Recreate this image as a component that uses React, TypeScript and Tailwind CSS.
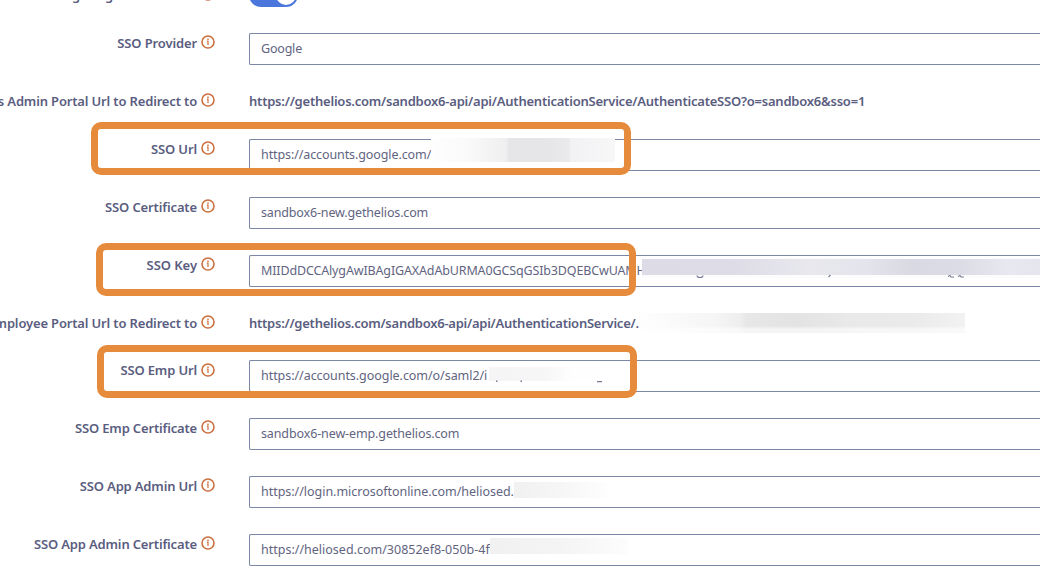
import type { ReactNode } from 'react'

interface Field {
  label: string
  labelClass?: string
  value: string
  valueClass: string
  plain?: boolean
  // masking strip laid over the value
  mask?: ReactNode
  // orange frame around label and value
  frame?: string
}

const fields: Field[] = [
  {
    label: 'SSO Provider',
    labelClass: 'tracking-[-0.13px]',
    value: 'Google',
    valueClass: 'tracking-[-0.2px]'
  },
  {
    label: 'Helios Admin Portal Url to Redirect to',
    labelClass: 'tracking-[-0.16px]',
    value:
      'https://gethelios.com/sandbox6-api/api/AuthenticationService/AuthenticateSSO?o=sandbox6&sso=1',
    valueClass: 'tracking-[-0.22px]',
    plain: true
  },
  {
    label: 'SSO Url',
    labelClass: 'tracking-[-0.13px]',
    value: 'https://accounts.google.com/',
    valueClass: 'tracking-[-0.1px]',
    mask: (
      <div className="absolute -top-px left-[182px] h-6 w-[184px] bg-[linear-gradient(to_right,#fefefe_0%,#fafafa_20%,#f3f3f4_32%,#efeff0_41%,#e6e6e9_42%,#e6e6e9_64%,#eaeaec_75%,#f2f2f4_76%,#f7f7f8_100%)]" />
    ),
    frame: 'left-[91px] top-[-16.5px] h-[53px] w-[540px]'
  },
  {
    label: 'SSO Certificate',
    labelClass: 'tracking-[-0.13px]',
    value: 'sandbox6-new.gethelios.com',
    valueClass: 'tracking-[-0.15px]'
  },
  {
    label: 'SSO Key',
    labelClass: 'tracking-[-0.05px]',
    value: 'MIIDdDCCAlygAwIBAgIGAXAdAbURMA0GCSqGSIb3DQEBCwUAMH',
    valueClass: 'tracking-[-0.14px]',
    mask: (
      <>
        <div className="absolute left-[393px] top-[3px] h-5 w-[398px] bg-[#fcfcfd]" />
        <div className="absolute left-[393px] top-[4px] h-4 w-[398px] bg-[linear-gradient(to_right,#dddce6_0%,#dedde7_24%,#e8e8ee_42%,#e4e4ec_56%,#d9d9e3_68%,#dcdce6_80%,#e8e8f1_92%,#e5e5ee_100%)]" />
        <svg className="absolute left-[393px] top-[19px] h-1.5 w-[398px]" fill="none" stroke="#777b94">
          <path
            d="M55 1.5q0 2 3 2t3-2M186.500 3l2-2M306 2.500l2-1 1 1.500h3M316 2.500l2-1 1 1.500h3"
            strokeWidth="1.1"
          />
        </svg>
      </>
    ),
    frame: 'left-[95.5px] top-[-11.5px] h-[53px] w-[540px]'
  },
  {
    label: 'Helios Employee Portal Url to Redirect to',
    labelClass: 'tracking-[-0.16px]',
    value: 'https://gethelios.com/sandbox6-api/api/AuthenticationService/.',
    valueClass: 'tracking-[-0.25px]',
    plain: true,
    mask: (
      <div className="absolute left-[390px] top-0 h-5 w-[326px] bg-[linear-gradient(to_right,#fefefe_0%,#f5f5f5_24%,#eeeeee_31%,#e7e7e8_33%,#e3e3e4_48%,#e9e9e9_65%,#eaeaea_83%,#f2f2f2_100%)]">
        <div className="h-full bg-linear-to-b from-transparent from-65% to-white/60 to-80%" />
      </div>
    )
  },
  {
    label: 'SSO Emp Url',
    labelClass: 'tracking-[-0.15px]',
    value: 'https://accounts.google.com/o/saml2/i',
    valueClass: 'tracking-[-0.05px]',
    mask: (
      <>
        <div className="absolute left-[240px] top-[7px] h-3.5 w-[110px] bg-linear-to-r from-[#f5f5f5] via-[#f6f6f6] via-50% to-[#fefefe] to-75%" />
        <svg className="absolute left-[240px] top-[20px] h-1 w-[120px]" fill="#777b94">
          <path d="M7 .5h1.500v1.500H7zM31.500.5H33v1.500h-1.500zM108 1h5v1.200h-5z" />
        </svg>
      </>
    ),
    frame: 'left-[96.5px] top-[-15px] h-[53px] w-[540px]'
  },
  {
    label: 'SSO Emp Certificate',
    labelClass: 'tracking-[-0.17px]',
    value: 'sandbox6-new-emp.gethelios.com',
    valueClass: 'tracking-[-0.12px]'
  },
  {
    label: 'SSO App Admin Url',
    labelClass: 'tracking-[-0.17px]',
    value: 'https://login.microsoftonline.com/heliosed.',
    valueClass: 'tracking-[-0.03px]',
    mask: (
      <div className="absolute left-[265px] top-[6px] h-4 w-[94px] bg-linear-to-r from-[#f1f1f1] via-[#f6f6f6] to-[#fefefe]" />
    )
  },
  {
    label: 'SSO App Admin Certificate',
    labelClass: 'tracking-[-0.16px]',
    value: 'https://heliosed.com/30852ef8-050b-4f',
    valueClass: 'tracking-normal',
    mask: (
      <div className="absolute left-[241px] top-[4px] h-4 w-[138px] bg-linear-to-r from-[#f1f1f1] via-[#f4f4f4] via-50% to-[#fdfdfd]" />
    )
  }
]

function InfoIcon(): React.JSX.Element {
  return (
    <svg className="mt-[2.3px] size-3.5 shrink-0" viewBox="0 0 14 14" fill="none" stroke="#cb7040">
      <circle cx="7" cy="7" r="6" strokeWidth="1.6" />
      <path d="M5.900 6.200H7V10" strokeWidth="1.200" />
      <path d="M6.300 4.200H7.700" strokeWidth="1.400" />
    </svg>
  )
}

function Label({ text, className = '' }: { text: string; className?: string }): React.JSX.Element {
  return (
    <div className="flex w-[215px] shrink-0 justify-end gap-1">
      <span className={`leading-5 font-semibold whitespace-nowrap text-[#5a5d80] ${className}`}>
        {text}
      </span>
      <InfoIcon />
    </div>
  )
}

function FieldRow({ field }: { field: Field }): React.JSX.Element {
  const { label, labelClass, value, valueClass, plain, mask, frame } = field
  return (
    <div className={`relative flex shrink-0 gap-[34px] ${plain ? 'h-[47.75px]' : 'h-[57.95px]'}`}>
      <Label text={label} className={labelClass} />
      <div className="relative min-w-0 flex-1">
        {plain ? (
          <div className={`leading-5 font-semibold whitespace-nowrap text-[#5a5d80] ${valueClass}`}>
            {value}
          </div>
        ) : (
          <div className="flex h-8 items-center rounded-l-[2px] border border-r-0 border-[#7b88a5] pl-[11px]">
            <span
              className={`text-[12.5px] leading-5 whitespace-nowrap text-[#62647f] ${valueClass}`}
            >
              {value}
            </span>
          </div>
        )}
        {mask}
      </div>
      {frame && (
        <div className={`absolute rounded-[10px] border-[7.5px] border-[#e68b3b] ${frame}`} />
      )}
    </div>
  )
}

export default function App(): React.JSX.Element {
  return (
    <div className="h-[580px] w-[1040px] overflow-hidden bg-white font-['Noto_Sans',sans-serif] text-[13px]">
      <div className="-mt-[15px] flex flex-col">
        <div className="flex h-12 shrink-0 gap-[34px]">
          <Label text="Single Sign-On Enabled" className="tracking-[-0.1px]" />
          <div className="-mt-0.5 flex h-6 w-[49px] items-center justify-end rounded-full bg-[#4b76dc] px-0.5">
            <div className="size-5 rounded-full bg-white" />
          </div>
        </div>
        {fields.map((field) => (
          <FieldRow key={field.label} field={field} />
        ))}
      </div>
    </div>
  )
}
